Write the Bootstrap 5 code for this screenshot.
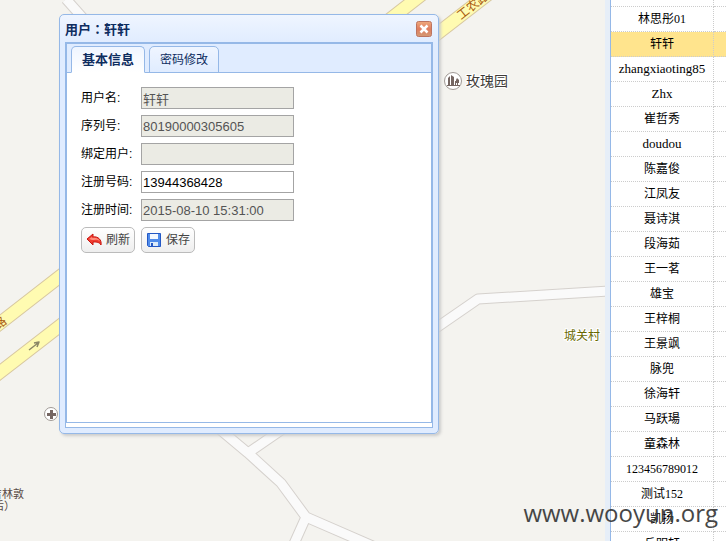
<!DOCTYPE html>
<html lang="zh-CN">
<head>
<meta charset="utf-8">
<meta name="viewport" content="width=device-width, initial-scale=1">
<title>用户：轩轩</title>
<link href="https://cdn.jsdelivr.net/npm/bootstrap@5.3.0/dist/css/bootstrap.min.css" rel="stylesheet">
<style>
  body { font: 12px/16px "Liberation Sans", "Noto Sans CJK SC", sans-serif; color: #000; }
  .map-pane { background: #f4f3ef; min-width: 0; }
  .map-pane > svg { font-family: "Liberation Sans", "Noto Sans CJK SC", sans-serif; }
  .splitter { width: 5px; background: #e6eef8; }
  .user-pane { width: 116px; border-left: 1px solid #95b8e7; background: #fff; }
  .user-grid { table-layout: fixed; width: 100%; border-collapse: separate; border-spacing: 0; margin-top: -18px;
    font-family: "Liberation Serif", "Noto Sans CJK SC", serif; text-align: center; }
  .user-grid td { height: 25px; padding: 0; border: 0 dotted #ccc; border-width: 0 1px 1px 0; white-space: nowrap; overflow: hidden; }
  .user-grid td:last-child { border-right: 0; }
  .user-grid .latin td { font-size: 13px; }
  .user-grid .selected td { background: #ffe48d; }
  .name-col { width: 103px; }

  .user-window { left: 59px; top: 14px; width: 380px; padding: 0 5px 5px; border: 1px solid #95b8e7; border-radius: 5px;
    background: linear-gradient(#eff5ff, #e0ecff 28px); box-shadow: 2px 2px 3px #ccc; }
  .window-head { height: 27px; color: #0e2d5f; }
  .window-title { font: 700 13px/16px "Noto Sans CJK TC", sans-serif; margin: 0; }
  .close-btn { width: 16px; height: 16px; margin-right: 1px; }
  .window-body { border: 1px solid #95b8e7; padding-bottom: 4px; background: #fff; }
  .tabs-box { border: 1px solid #95b8e7; }
  .nav-tabs.user-tabs { height: 29px; padding: 2px 4px 0; gap: 4px; background: #e0ecff; border-bottom: 1px solid #95b8e7; }
  .user-tabs .nav-link { height: 27px; padding: 0 10px; border: 1px solid #95b8e7; border-radius: 5px 5px 0 0; margin: 0;
    font-size: 12px; line-height: 24px; color: #0e2d5f; background: linear-gradient(#eff5ff, #e0ecff); }
  .user-tabs .nav-link.active { font-size: 13px; font-weight: 700; color: #0e2d5f; border-color: #95b8e7 #95b8e7 #fff;
    background: linear-gradient(#eff5ff, #fff); }
  .user-form { min-height: 349px; padding: 14px; }
  .form-line { margin-bottom: 6px; }
  .form-line label { width: 60px; }
  .form-line input { width: 153px; height: 22px; padding: 0 1px; border: 1px solid #a4a4a4; border-radius: 0; background: #fff;
    font: 13px/16px "Liberation Sans", "Noto Sans CJK SC", sans-serif; color: #000; }
  .form-line input:disabled { background: #ebebe4; color: #545454; }
  .tool-row { gap: 6px; }
  .tool-btn { height: 26px; padding: 0 4px; gap: 3px; border: 1px solid #bbb; border-radius: 5px; font-size: 12px; line-height: 16px;
    color: #444; background: linear-gradient(#fff, #eee); }
  .watermark { right: 8px; bottom: 12px; font: 24px/32px "Open Sans", sans-serif; color: #333; opacity: .9; pointer-events: none; }
</style>
<script src="https://cdn.jsdelivr.net/npm/bootstrap@5.3.0/dist/js/bootstrap.bundle.min.js"></script>
</head>
<body>
<div class="d-flex vh-100 overflow-hidden position-relative">
  <main class="map-pane flex-grow-1 position-relative overflow-hidden">
    <svg class="d-block w-100 h-100" role="img" aria-label="地图">
      <g fill="none" stroke-linejoin="round">
        <path stroke="#d5d1cd" stroke-width="11" d="M66-1L90 26M436 328L478 299L610 291M211 422L248 453L281 483L306 517L375 547M248 453L290 424M306 517L293 546"/>
        <path stroke="#fafafa" stroke-width="9" d="M66-1L90 26M436 328L478 299L610 291M211 422L248 453L281 483L306 517L375 547M248 453L290 424M306 517L293 546"/>
        <path stroke="#d8c8a0" stroke-width="14" d="M-10 331L425-8M-10 380L491-8"/>
        <path stroke="#fffbb1" stroke-width="12" d="M-10 331L425-8M-10 380L491-8"/>
        <path stroke="#8c8866" stroke-width="1.500" d="M29 350L38 343M34 343L39 342L37 347"/>
      </g>
      <g fill="#a8580c" font-size="12">
        <text transform="translate(461 20) rotate(-38)">工农路</text>
        <text transform="translate(-2 330) rotate(-38)">路</text>
      </g>
      <g fill="#fff" stroke="#a09a96">
        <circle cx="453" cy="81" r="8.500"/>
        <circle cx="51" cy="414" r="6.500"/>
      </g>
      <path fill="#756662" d="M448 78L450 76V86H448ZM451 75L454 77V86H451ZM455 81H456V86H455ZM457 78L459 80V83H458V86H457V83H456V80ZM447 85H460V86H447ZM50 410H53V413H56V416H53V419H50V416H47V413H50Z"/>
      <text x="466" y="86" font-size="14" fill="#403b39" stroke="#fff" stroke-width="2" paint-order="stroke">玫瑰园</text>
      <text x="564" y="340" font-size="12" fill="#686800" stroke="#fff" stroke-width="2" paint-order="stroke">城关村</text>
      <g font-size="11" fill="#594b47">
        <text x="-9" y="498">吉林敦</text>
        <text x="-7" y="510">后）</text>
      </g>
    </svg>

    <section class="user-window position-absolute" role="dialog" aria-labelledby="window-title">
      <header class="window-head d-flex align-items-center justify-content-between">
        <h1 class="window-title" id="window-title" lang="zh-TW">用户：轩轩</h1>
        <button type="button" class="close-btn btn p-0 border-0 d-flex" aria-label="关闭">
          <svg width="16" height="16" viewBox="0 0 16 16" aria-hidden="true">
            <defs><linearGradient id="close-fill" x2="0" y2="1"><stop stop-color="#efaa7d"/><stop offset=".5" stop-color="#df7d5f"/><stop offset="1" stop-color="#d39a74"/></linearGradient></defs>
            <rect x=".5" y=".5" width="15" height="15" rx="2" fill="url(#close-fill)" stroke="#bd7460"/>
            <path d="M4.500 4.500L11.500 11.500M11.500 4.500L4.500 11.500" stroke="#fff" stroke-width="2.500"/>
          </svg>
        </button>
      </header>
      <div class="window-body">
        <div class="tabs-box">
          <div class="nav nav-tabs user-tabs" role="tablist">
            <button type="button" class="nav-link active" id="tab-info" role="tab" aria-selected="true" aria-controls="panel-info">基本信息</button>
            <button type="button" class="nav-link" role="tab" aria-selected="false">密码修改</button>
          </div>
          <form class="user-form" id="panel-info" role="tabpanel" aria-labelledby="tab-info">
            <div class="form-line d-flex align-items-center"><label for="f-user">用户名:</label><input id="f-user" type="text" value="轩轩" disabled></div>
            <div class="form-line d-flex align-items-center"><label for="f-serial">序列号:</label><input id="f-serial" type="text" value="80190000305605" disabled></div>
            <div class="form-line d-flex align-items-center"><label for="f-bind">绑定用户:</label><input id="f-bind" type="text" disabled></div>
            <div class="form-line d-flex align-items-center"><label for="f-phone">注册号码:</label><input id="f-phone" type="text" value="13944368428"></div>
            <div class="form-line d-flex align-items-center"><label for="f-time">注册时间:</label><input id="f-time" type="text" value="2015-08-10 15:31:00" disabled></div>
            <div class="tool-row d-flex">
              <button type="button" class="tool-btn btn d-flex align-items-center">
                <svg width="17" height="16" viewBox="0 0 17 16" aria-hidden="true"><path d="M1 7L7 2V5C12 4 16 8 15 13C13 10 11 10 7 10V13Z" fill="#f03c30" stroke="#c8150f"/><path d="M3 7L6 5V6C10 5 13 7 14 9C11 7 8 8 6 8Z" fill="#ff8d7c"/></svg>
                刷新
              </button>
              <button type="button" class="tool-btn btn d-flex align-items-center">
                <svg width="17" height="16" viewBox="0 0 17 16" aria-hidden="true"><path d="M1.500 1.500H14.500V14.500H2.500L1.500 13.500Z" fill="#4f8bea" stroke="#2458c4"/><path d="M4 2H12V7H4Z" fill="#f4f9ff"/><path d="M4 10H12V14H4Z" fill="#dcebfa"/><path d="M5 11H7V14H5Z" fill="#2458c4"/></svg>
                保存
              </button>
            </div>
          </form>
        </div>
      </div>
    </section>
  </main>
  <div class="splitter flex-shrink-0"></div>
  <aside class="user-pane flex-shrink-0 overflow-hidden">
    <table class="user-grid" aria-label="用户列表">
      <colgroup><col class="name-col"><col></colgroup>
      <tbody>
        <tr><td></td><td></td></tr>
        <tr><td>林思彤01</td><td></td></tr>
        <tr class="selected"><td>轩轩</td><td></td></tr>
        <tr class="latin"><td>zhangxiaoting85</td><td></td></tr>
        <tr class="latin"><td>Zhx</td><td></td></tr>
        <tr><td>崔哲秀</td><td></td></tr>
        <tr class="latin"><td>doudou</td><td></td></tr>
        <tr><td>陈嘉俊</td><td></td></tr>
        <tr><td>江凤友</td><td></td></tr>
        <tr><td>聂诗淇</td><td></td></tr>
        <tr><td>段海茹</td><td></td></tr>
        <tr><td>王一茗</td><td></td></tr>
        <tr><td>雄宝</td><td></td></tr>
        <tr><td>王梓桐</td><td></td></tr>
        <tr><td>王景飒</td><td></td></tr>
        <tr><td>脉兜</td><td></td></tr>
        <tr><td>徐海轩</td><td></td></tr>
        <tr><td>马跃瑒</td><td></td></tr>
        <tr><td>童森林</td><td></td></tr>
        <tr><td>123456789012</td><td></td></tr>
        <tr><td>测试152</td><td></td></tr>
        <tr><td>凯扬</td><td></td></tr>
        <tr><td>丘明轩</td><td></td></tr>
      </tbody>
    </table>
  </aside>
  <div class="watermark position-absolute">www.wooyun.org</div>
</div>
</body>
</html>
